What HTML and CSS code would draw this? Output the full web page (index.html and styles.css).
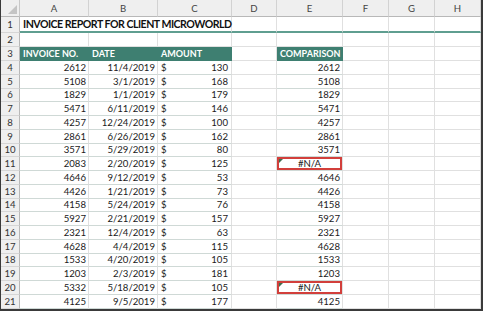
FILE: index.html
```html
<!DOCTYPE html>
<html>
<head>
<meta charset="utf-8">
<link rel="stylesheet" href="styles.css">
</head>
<body>
<div class="sheet">
  <div class="corner"><span class="tri"></span></div>
  <div class="ch">A</div><div class="ch">B</div><div class="ch">C</div><div class="ch">D</div><div class="ch">E</div><div class="ch">F</div><div class="ch">G</div><div class="ch">H</div>

  <div class="rh">1</div>
  <div class="c r1 title">INVOICE REPORT FOR CLIENT MICROWORLD</div><div class="c r1"></div><div class="c r1"></div><div class="c r1"></div><div class="c r1"></div><div class="c r1"></div>

  <div class="rh">2</div>
  <div class="c"></div><div class="c"></div><div class="c"></div><div class="c"></div><div class="c"></div><div class="c"></div><div class="c"></div><div class="c"></div>

  <div class="rh">3</div>
  <div class="c hd">INVOICE NO.</div><div class="c hd">DATE</div><div class="c hd">AMOUNT</div><div class="c"></div><div class="c hd">COMPARISON</div><div class="c"></div><div class="c"></div><div class="c"></div>

  <div class="rh">4</div><div class="c t num">2612</div><div class="c t num">11/4/2019</div><div class="c t amt"><span>$</span><span>130</span></div><div class="c"></div><div class="c t num">2612</div><div class="c"></div><div class="c"></div><div class="c"></div>
  <div class="rh">5</div><div class="c t num">5108</div><div class="c t num">3/1/2019</div><div class="c t amt"><span>$</span><span>168</span></div><div class="c"></div><div class="c t num">5108</div><div class="c"></div><div class="c"></div><div class="c"></div>
  <div class="rh">6</div><div class="c t num">1829</div><div class="c t num">1/1/2019</div><div class="c t amt"><span>$</span><span>179</span></div><div class="c"></div><div class="c t num">1829</div><div class="c"></div><div class="c"></div><div class="c"></div>
  <div class="rh">7</div><div class="c t num">5471</div><div class="c t num">6/11/2019</div><div class="c t amt"><span>$</span><span>146</span></div><div class="c"></div><div class="c t num">5471</div><div class="c"></div><div class="c"></div><div class="c"></div>
  <div class="rh">8</div><div class="c t num">4257</div><div class="c t num">12/24/2019</div><div class="c t amt"><span>$</span><span>100</span></div><div class="c"></div><div class="c t num">4257</div><div class="c"></div><div class="c"></div><div class="c"></div>
  <div class="rh">9</div><div class="c t num">2861</div><div class="c t num">6/26/2019</div><div class="c t amt"><span>$</span><span>162</span></div><div class="c"></div><div class="c t num">2861</div><div class="c"></div><div class="c"></div><div class="c"></div>
  <div class="rh">10</div><div class="c t num">3571</div><div class="c t num">5/29/2019</div><div class="c t amt"><span>$</span><span>80</span></div><div class="c"></div><div class="c t num">3571</div><div class="c"></div><div class="c"></div><div class="c"></div>
  <div class="rh">11</div><div class="c t num">2083</div><div class="c t num">2/20/2019</div><div class="c t amt"><span>$</span><span>125</span></div><div class="c"></div><div class="c t err"><span class="flag"></span>#N/A</div><div class="c"></div><div class="c"></div><div class="c"></div>
  <div class="rh">12</div><div class="c t num">4646</div><div class="c t num">9/12/2019</div><div class="c t amt"><span>$</span><span>53</span></div><div class="c"></div><div class="c t num">4646</div><div class="c"></div><div class="c"></div><div class="c"></div>
  <div class="rh">13</div><div class="c t num">4426</div><div class="c t num">1/21/2019</div><div class="c t amt"><span>$</span><span>73</span></div><div class="c"></div><div class="c t num">4426</div><div class="c"></div><div class="c"></div><div class="c"></div>
  <div class="rh">14</div><div class="c t num">4158</div><div class="c t num">5/24/2019</div><div class="c t amt"><span>$</span><span>76</span></div><div class="c"></div><div class="c t num">4158</div><div class="c"></div><div class="c"></div><div class="c"></div>
  <div class="rh">15</div><div class="c t num">5927</div><div class="c t num">2/21/2019</div><div class="c t amt"><span>$</span><span>157</span></div><div class="c"></div><div class="c t num">5927</div><div class="c"></div><div class="c"></div><div class="c"></div>
  <div class="rh">16</div><div class="c t num">2321</div><div class="c t num">12/4/2019</div><div class="c t amt"><span>$</span><span>63</span></div><div class="c"></div><div class="c t num">2321</div><div class="c"></div><div class="c"></div><div class="c"></div>
  <div class="rh">17</div><div class="c t num">4628</div><div class="c t num">4/4/2019</div><div class="c t amt"><span>$</span><span>115</span></div><div class="c"></div><div class="c t num">4628</div><div class="c"></div><div class="c"></div><div class="c"></div>
  <div class="rh">18</div><div class="c t num">1533</div><div class="c t num">4/20/2019</div><div class="c t amt"><span>$</span><span>105</span></div><div class="c"></div><div class="c t num">1533</div><div class="c"></div><div class="c"></div><div class="c"></div>
  <div class="rh">19</div><div class="c t num">1203</div><div class="c t num">2/3/2019</div><div class="c t amt"><span>$</span><span>181</span></div><div class="c"></div><div class="c t num">1203</div><div class="c"></div><div class="c"></div><div class="c"></div>
  <div class="rh">20</div><div class="c t num">5332</div><div class="c t num">5/18/2019</div><div class="c t amt"><span>$</span><span>105</span></div><div class="c"></div><div class="c t err"><span class="flag"></span>#N/A</div><div class="c"></div><div class="c"></div><div class="c"></div>
  <div class="rh">21</div><div class="c t num">4125</div><div class="c t num">9/5/2019</div><div class="c t amt"><span>$</span><span>177</span></div><div class="c"></div><div class="c t num">4125</div><div class="c"></div><div class="c"></div><div class="c"></div>
</div>
</body>
</html>
```

FILE: styles.css
```css
html, body {
  margin: 0;
  padding: 0;
  background: #ffffff;
  overflow: hidden;
}

.sheet {
  width: 483px;
  height: 311px;
  box-sizing: border-box;
  border-left: 1px solid #3a3a3a;
  border-right: 2px solid #3a3a3a;
  border-bottom: 2px solid #3a3a3a;
  display: grid;
  grid-template-columns: 19px 69px 69px 74px 45px 66px 46px 46px 46px;
  grid-template-rows: 17px 16px 14px 14px repeat(18, 13.75px);
  font-family: "Lato", "Liberation Sans", sans-serif;
  font-size: 9.6px;
  color: #1a1a1a;
  overflow: hidden;
}

.corner {
  background: #efefef;
  border-right: 1px solid #c8c8c8;
  border-bottom: 1px solid #b8b8b8;
  position: relative;
}

.corner .tri {
  position: absolute;
  right: 2px;
  bottom: 2px;
  width: 0;
  height: 0;
  border-left: 9px solid transparent;
  border-bottom: 9px solid #c4c4c4;
}

.ch {
  background: #efefef;
  border-right: 1px solid #d2d2d2;
  border-bottom: 1px solid #b8b8b8;
  color: #444;
  display: flex;
  align-items: center;
  justify-content: center;
  font-size: 9.6px;
}

.rh {
  background: #efefef;
  border-right: 1px solid #b8b8b8;
  border-bottom: 1px solid #d6d6d6;
  color: #333;
  display: flex;
  align-items: center;
  justify-content: center;
  font-size: 9.6px;
}

.c {
  border-right: 1px solid #e0e0e0;
  border-bottom: 1px solid #e0e0e0;
  box-sizing: border-box;
  display: flex;
  align-items: center;
  padding: 0 2px;
  white-space: nowrap;
  min-width: 0;
}

.r1 {
  border-bottom: 2px solid #5f9e90;
}

.title {
  grid-column: span 3;
  font-weight: 700;
  font-size: 10.6px;
  letter-spacing: -0.5px;
  color: #111;
  padding-left: 3px;
  border-right-color: #e0e0e0;
}

.hd {
  background: #3e7f71;
  color: #ffffff;
  font-weight: 700;
  font-size: 9px;
  border-right-color: #3e7f71;
  border-bottom: 1px solid #3e7f71;
  padding-left: 3px;
}

.t {
  border-bottom-color: #cfd9d6;
}

.num {
  justify-content: flex-end;
}

.amt {
  justify-content: space-between;
  padding-left: 3px;
  padding-right: 3px;
}

.err {
  justify-content: center;
  position: relative;
  box-shadow: inset 0 0 0 2px #d23f3b;
}

.flag {
  position: absolute;
  left: 2px;
  top: 2px;
  width: 0;
  height: 0;
  border-top: 4px solid #3d6e4f;
  border-right: 4px solid transparent;
}
```
